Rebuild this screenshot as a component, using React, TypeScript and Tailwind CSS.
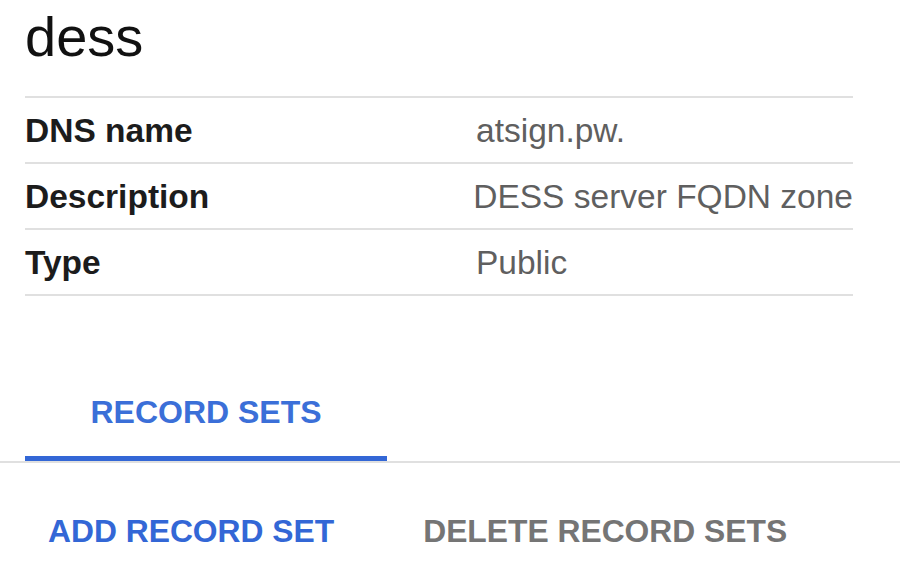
export default function App() {
  const rows = [
    { label: "DNS name", value: "atsign.pw." },
    { label: "Description", value: "DESS server FQDN zone" },
    { label: "Type", value: "Public" },
  ];

  return (
    <div className="w-[900px] h-[584px] bg-white overflow-hidden font-['Liberation_Sans',Arial,sans-serif]">
      {/* Zone title */}
      <h1 className="pl-[25px] pt-[6px] h-[96px] text-[56px] leading-[62px] font-normal text-[#111]">
        dess
      </h1>

      {/* Details table */}
      <div className="ml-[25px] w-[828px] border-t-2 border-[#e0e0e0]">
        {rows.map((row) => (
          <div
            key={row.label}
            className="flex items-center h-[66px] border-b-2 border-[#e0e0e0] text-[33.5px] pt-[2px]"
          >
            <div className="w-[451px] font-bold text-[#1c1c1c]">{row.label}</div>
            <div className="text-[#5f5f5f] whitespace-nowrap">{row.value}</div>
          </div>
        ))}
      </div>

      {/* Tabs */}
      <div className="mt-[96px] flex border-b-2 border-[#e0e0e0]">
        <div className="ml-[25px] w-[362px] flex flex-col items-center">
          <span className="text-[32px] font-bold text-[#3b6fd8] leading-[40px]">
            RECORD SETS
          </span>
          <div className="mt-[24px] h-[5px] w-full bg-[#3367d6]" />
        </div>
      </div>

      {/* Actions */}
      <div className="flex items-center gap-[89px] pl-[48px] pt-[45px] text-[31.8px] font-bold">
        <button className="text-[#3367d6]">ADD RECORD SET</button>
        <button className="text-[#757575]">DELETE RECORD SETS</button>
      </div>
    </div>
  );
}
